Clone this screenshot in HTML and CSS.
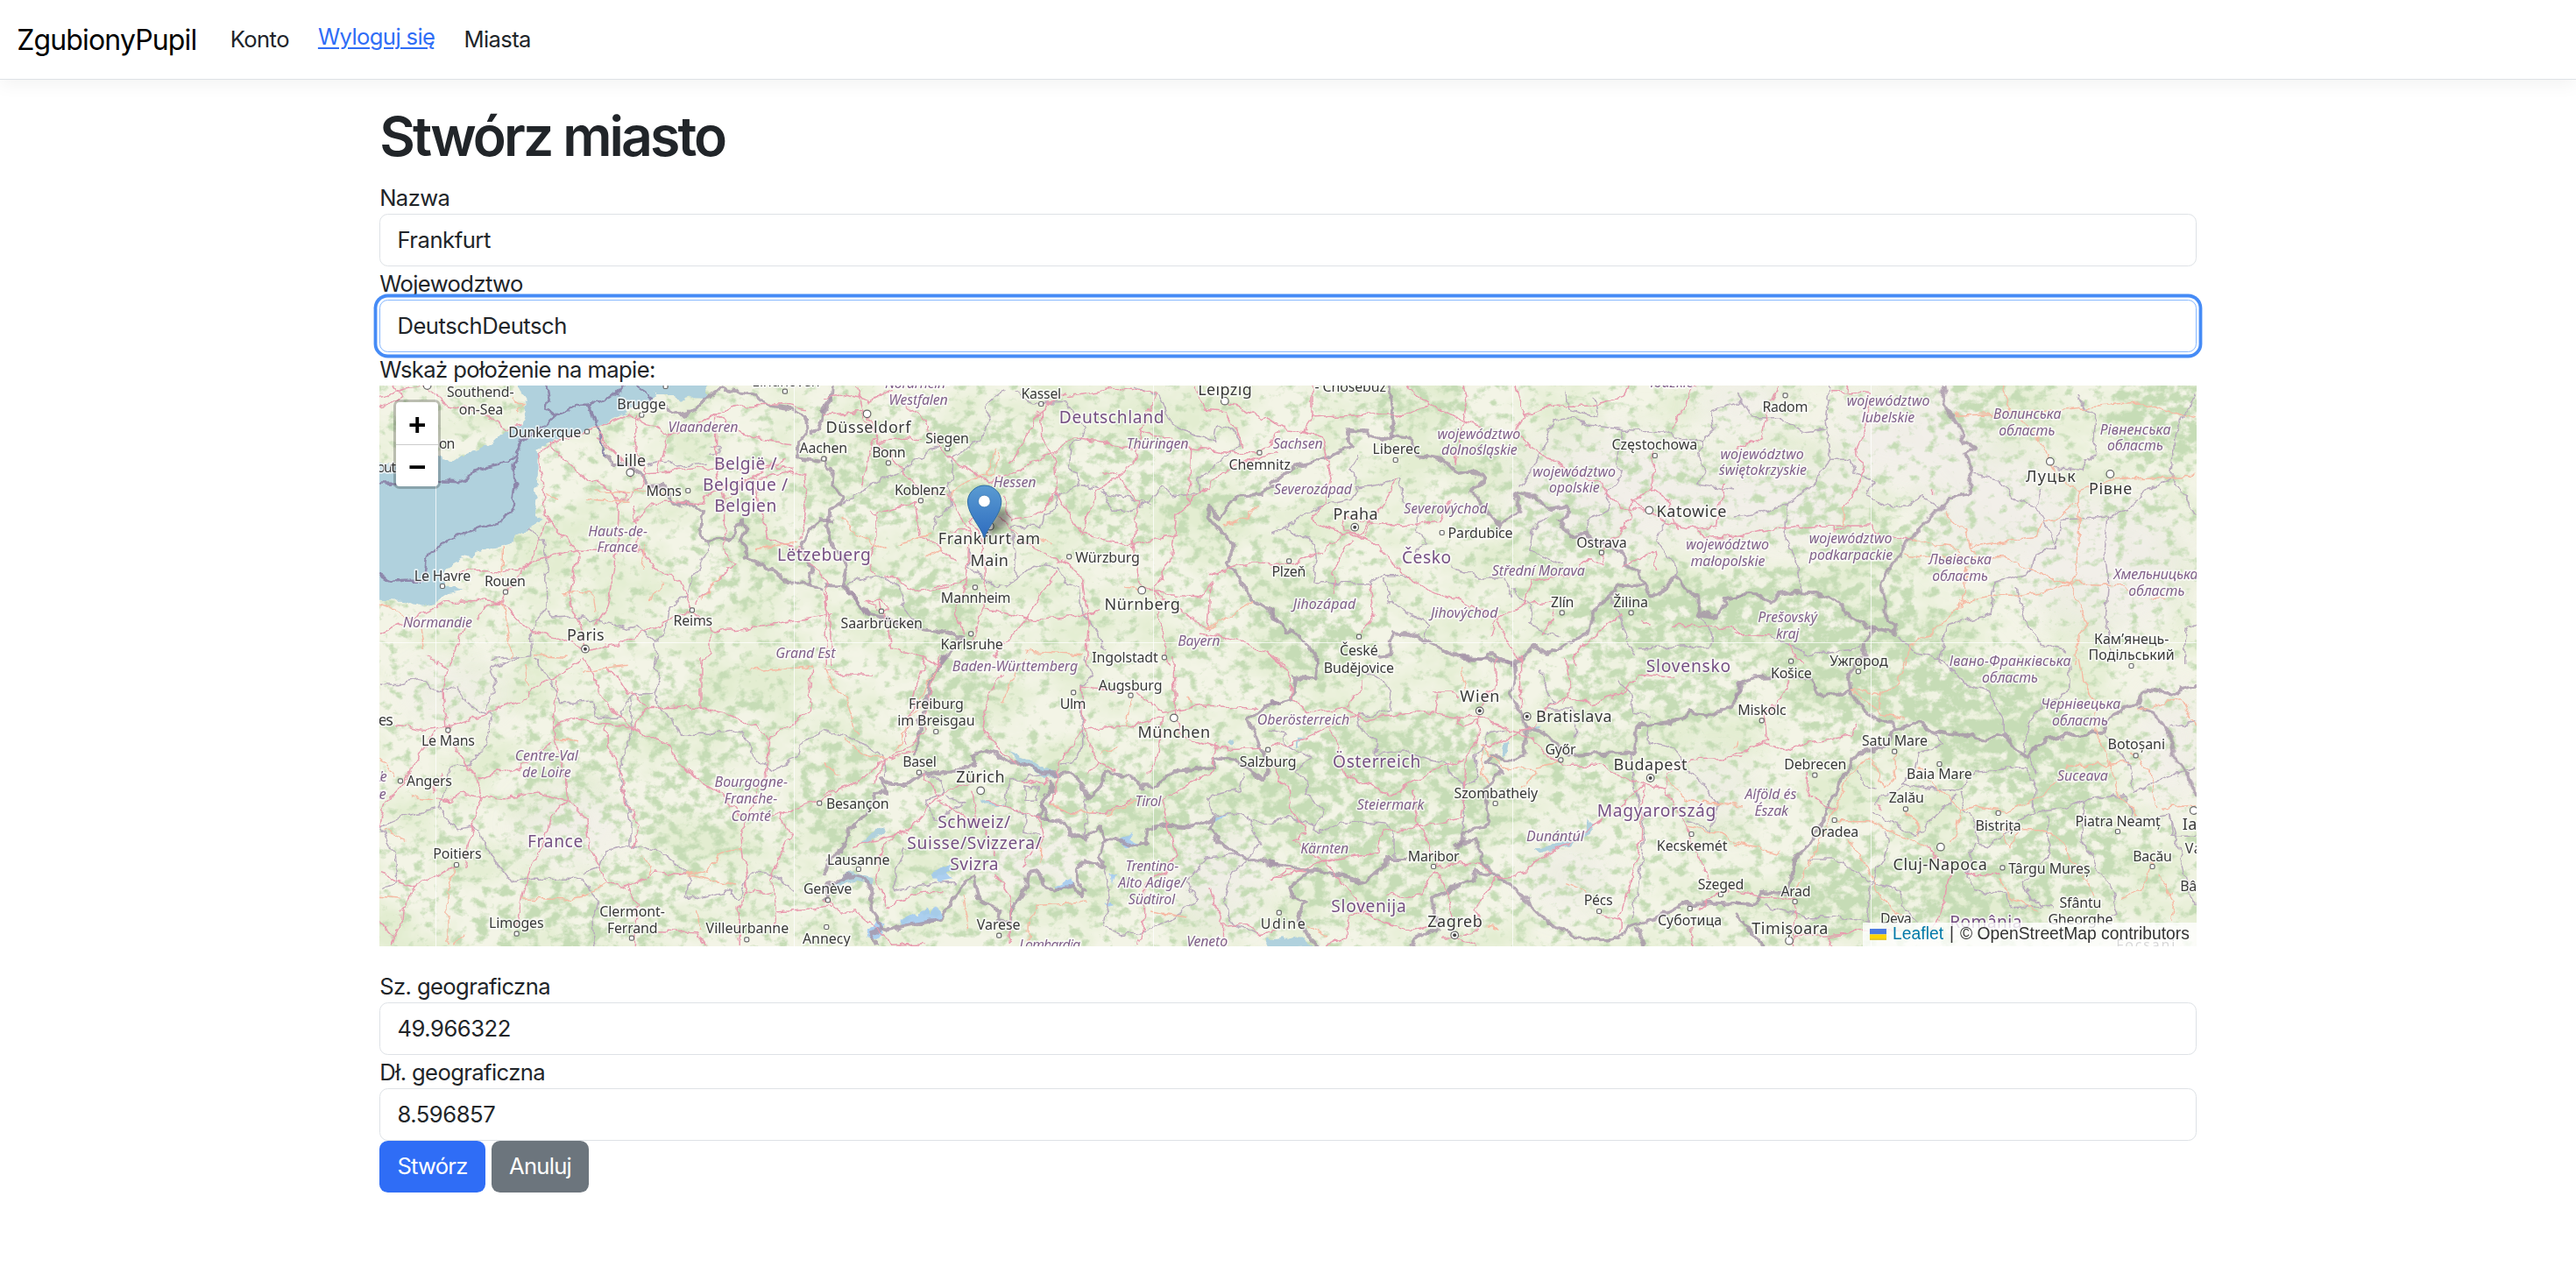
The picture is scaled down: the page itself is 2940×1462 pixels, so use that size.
FILE: index.html
```html
<!DOCTYPE html>
<html lang="pl">
<head>
<meta charset="utf-8">
<title>Stwórz miasto - ZgubionyPupil</title>
<link rel="stylesheet" href="styles.css">
</head>
<body>
<header class="navbar">
  <a class="brand" href="#">ZgubionyPupil</a>
  <nav class="nav">
    <a class="nav-link konto" href="#">Konto</a>
    <a class="logout" href="#">Wyloguj się</a>
    <a class="nav-link" href="#">Miasta</a>
  </nav>
</header>
<main class="container">
  <h1>Stwórz miasto</h1>
  <form class="form">
    <label for="name">Nazwa</label>
    <input class="control" id="name" type="text" value="Frankfurt">
    <label for="region">Wojewodztwo</label>
    <input class="control focused" id="region" type="text" value="DeutschDeutsch">
    <label class="map-label">Wskaż położenie na mapie:</label>
    <div class="map">
      <svg class="map-canvas" id="map" viewBox="433 440 2074 640" preserveAspectRatio="none">
        <defs>
          <filter id="woods" filterUnits="userSpaceOnUse" x="433" y="440" width="2074" height="640" color-interpolation-filters="sRGB">
            <feGaussianBlur in="SourceAlpha" stdDeviation="14" result="d"/>
            <feTurbulence type="fractalNoise" baseFrequency=".07 .085" numOctaves="5" seed="7"/>
            <feColorMatrix values="0 0 0 0 0  0 0 0 0 0  0 0 0 0 0  0 0 0 1 0" result="n"/>
            <feComposite in="n" in2="d" operator="arithmetic" k2="4.5" k3="1.35" k4="-2.5" result="m"/>
            <feFlood flood-color="#c6dcb6"/>
            <feComposite in2="m" operator="in"/>
          </filter>
          <filter id="fields" filterUnits="userSpaceOnUse" x="433" y="440" width="2074" height="640" color-interpolation-filters="sRGB">
            <feTurbulence type="fractalNoise" baseFrequency=".012 .016" numOctaves="5" seed="21"/>
            <feColorMatrix values="0 0 0 0 .89  0 0 0 0 .93  0 0 0 0 .82  0 0 0 3 -1.2"/>
          </filter>
          <filter id="rough" filterUnits="userSpaceOnUse" x="433" y="440" width="2074" height="640" color-interpolation-filters="sRGB">
            <feTurbulence type="fractalNoise" baseFrequency=".07" numOctaves="3" seed="3"/>
            <feDisplacementMap in="SourceGraphic" scale="11" xChannelSelector="R" yChannelSelector="G"/>
          </filter>
          <filter id="soft"><feGaussianBlur stdDeviation="22"/></filter>
          <filter id="shade"><feGaussianBlur stdDeviation="3"/></filter>
          <linearGradient id="pin" x1="0" y1="0" x2="0" y2="1">
            <stop offset="0" stop-color="#5a9bd2"/><stop offset="1" stop-color="#2e6cbf"/>
          </linearGradient>
        </defs>
      </svg>
      <div class="zoom"><span>+</span><span>−</span></div>
      <div class="attribution">
        <svg class="flag" viewBox="0 0 12 8"><path fill="#4C7BE1" d="M0 0h12v4H0z"/><path fill="#FFD500" d="M0 4h12v3H0z"/><path fill="#E0BC00" d="M0 7h12v1H0z"/></svg>
        <a href="#">Leaflet</a><span>|</span><span>© OpenStreetMap contributors</span>
      </div>
    </div>
    <label for="lat">Sz. geograficzna</label>
    <input class="control" id="lat" type="text" value="49.966322">
    <label for="lng">Dł. geograficzna</label>
    <input class="control" id="lng" type="text" value="8.596857">
    <div class="actions">
      <button class="btn primary" type="button">Stwórz</button>
      <button class="btn secondary" type="button">Anuluj</button>
    </div>
  </form>
</main>
<script src="map.js"></script>
</body>
</html>
```
FILE: styles.css
```css
* { box-sizing: border-box; }
body {
  margin: 0;
  background: #fff;
  color: #212529;
  font: 25.6px/1.5 Inter, "Noto Sans", sans-serif;
  letter-spacing: -0.6px;
}
.navbar {
  display: flex;
  align-items: center;
  height: 91px;
  padding: 1px 19.2px 0;
  border-bottom: 1px solid #dee2e6;
  box-shadow: 0 6.4px 19.2px rgba(0, 0, 0, .05);
}
.brand { margin-right: 38.4px; color: #000; font-size: 32px; text-decoration: none; letter-spacing: -0.85px; }
.nav { display: flex; gap: 33px; align-items: center; }
.nav-link { color: #212529; text-decoration: none; }
.logout { color: #2f6df6; margin-top: -6px; text-underline-offset: 3px; }
.container { width: 2112px; margin: 25.6px auto 0; padding: 0 19.2px; }
h1 { margin: 0 0 12.2px; font-size: 62.5px; font-weight: 600; line-height: 76.8px; letter-spacing: -2.9px; }
.form { display: flex; flex-direction: column; }
label { height: 38.4px; padding-top: 1px; line-height: 38.4px; }
.control {
  height: 59.6px;
  padding: 0 19.2px;
  border: 1px solid #dee2e6;
  border-radius: 9.6px;
  background: #fff;
  color: #212529;
  font: inherit;
  letter-spacing: -0.45px;
  outline: 0;
}
.focused { border-color: #86b7fe; box-shadow: 0 0 0 2.6px #fff, 0 0 0 6.4px #458bf6; }
.map { position: relative; height: 640px; margin-bottom: 25.6px; overflow: hidden; background: #f1f2e2; }
.map-canvas { display: block; width: 100%; height: 640px; }
.zoom {
  position: absolute;
  left: 16px;
  top: 16px;
  border: 3px solid rgba(0, 0, 0, .22);
  border-radius: 7px;
  background: #fff;
  background-clip: padding-box;
  color: #000;
}
.zoom span { display: block; width: 48px; height: 48px; text-align: center; font: bold 35px/52px "Liberation Sans", sans-serif; letter-spacing: 0; }
.zoom span + span { border-top: 1px solid #ccc; line-height: 50px; }
.attribution {
  position: absolute;
  right: 0;
  bottom: 0;
  display: flex;
  align-items: center;
  gap: 7px;
  height: 27px;
  padding: 0 8px;
  background: rgba(255, 255, 255, .8);
  color: #333;
  font: 19.3px/26px "Liberation Sans", sans-serif;
  letter-spacing: 0;
}
.attribution a { color: #0078a8; text-decoration: none; }
.flag { width: 19.2px; height: 12.8px; }
.actions { display: flex; gap: 7px; }
.btn { height: 59.6px; padding: 0 20.2px; border: 0; border-radius: 9.6px; color: #fff; font: inherit; letter-spacing: -0.75px; }
.primary { background: #2f6df6; }
.secondary { background: #6c757d; }

.place { font-family: "Noto Sans", sans-serif; letter-spacing: 0; paint-order: stroke; stroke: rgba(255, 255, 255, .7); stroke-width: 3.4px; stroke-linejoin: round; fill: #383838; }
.town { font-size: 16px; }
.city { font-size: 18px; }
.country { font-size: 19.2px; fill: #754f83; }
.region { font-size: 16px; font-style: italic; fill: #80608a; }
.road, .trunk, .border, .line, .limit { fill: none; stroke-linejoin: round; }
.road { stroke: #e89bae; stroke-width: 1.5; }
.trunk { stroke: #f6b9a3; stroke-width: 1.4; }
.border { stroke: #a594a8; stroke-width: 3.9; opacity: .8; }
.line { stroke: #b8a9bc; stroke-width: 1.5; }
.limit { stroke: #8d87ab; stroke-width: 2.6; }
.water { fill: #b0d1dd; }
.glacier { fill: #9cc7f5; opacity: .8; }
.dot { fill: #fff; stroke: #666; stroke-width: 1.2; }
.bull { fill: #444; }
.seam { stroke: #fff; stroke-width: 1; opacity: .75; }
```
FILE: map.js
```js
const NS = 'http://www.w3.org/2000/svg';
const svg = document.getElementById('map');
// Survey sheets: origin x, origin y, horizontal scale. Vertical scale is always 3.
const SHEETS = {
  A: [430, 430, 3], B: [430, 750, 3], C: [940, 430, 3], D: [940, 750, 3],
  E: [1450, 430, 2.904], F: [1450, 750, 2.904], G: [1980, 430, 2.904], H: [1980, 750, 2.904]
};
const X = (s, x) => SHEETS[s][0] + x / SHEETS[s][2];
const Y = (s, y) => SHEETS[s][1] + y / 3;
function add(parent, tag, attrs, text) {
  const e = document.createElementNS(NS, tag);
  for (const k in attrs) e.setAttribute(k, attrs[k]);
  if (text) e.textContent = text;
  parent.appendChild(e);
  return e;
}
function toPath(s, str, close) {
  const p = str.split(' ').map(q => { const [x, y] = q.split(',').map(Number); return X(s, x).toFixed(1) + ' ' + Y(s, y).toFixed(1); });
  return 'M' + p.join('L') + (close ? 'Z' : '');
}
function layer(attrs) { return add(svg, 'g', attrs || {}); }

add(svg, 'rect', { x: 433, y: 440, width: 2074, height: 640, fill: '#f3f4e6' });
add(svg, 'rect', { x: 433, y: 440, width: 2074, height: 640, filter: 'url(#fields)' });
const pale = layer({ filter: 'url(#soft)', fill: '#f2eeea', opacity: .8 });
[[1830, 560, 110, 70], [2010, 570, 110, 50], [2180, 500, 90, 60], [2400, 640, 100, 80], [2280, 580, 80, 70], [1990, 460, 60, 30],
 [520, 790, 60, 30], [1180, 980, 60, 30], [1390, 1000, 50, 60], [650, 940, 60, 40], [2480, 850, 40, 70], [1960, 900, 40, 40], [1790, 1000, 50, 40]]
  .forEach(([cx, cy, rx, ry]) => add(pale, 'ellipse', { cx, cy, rx, ry }));

// Wooded areas: centre, radii, density
const woods = layer({ filter: 'url(#woods)' });
[[1470, 1000, 1100, 110, .12], [1600, 850, 120, 35, .6], [1570, 920, 150, 60, .5], [1350, 900, 190, 60, .35], [1200, 960, 180, 90, .25],
 [1590, 1000, 130, 50, .45], [1090, 800, 50, 80, .6], [960, 900, 50, 90, .45], [1060, 690, 60, 40, .6], [1100, 540, 120, 70, .5],
 [1300, 560, 90, 80, .35], [1390, 570, 50, 30, .5], [1500, 720, 60, 60, .6], [1780, 620, 60, 60, .45], [1900, 700, 120, 40, .7],
 [1880, 790, 110, 50, .55], [2050, 700, 150, 50, .6], [2140, 760, 120, 60, .65], [2260, 820, 90, 50, .8], [2340, 880, 60, 60, .7],
 [2380, 960, 60, 60, .5], [2270, 860, 60, 40, .5], [2090, 1020, 60, 50, .7], [2190, 1020, 80, 60, .5], [2290, 1000, 80, 60, .45],
 [2470, 480, 60, 50, .8], [2270, 460, 70, 40, .5], [2430, 580, 70, 12, .6], [1630, 460, 60, 20, .6], [2070, 580, 40, 40, .45],
 [2170, 620, 60, 30, .45], [850, 640, 50, 50, .4], [780, 820, 110, 60, .35], [780, 930, 60, 70, .35], [640, 880, 50, 60, .4],
 [620, 1060, 80, 40, .5], [730, 1040, 60, 50, .3], [960, 560, 50, 60, .4], [1820, 880, 50, 40, .4], [1440, 700, 120, 100, .2],
 [1680, 560, 60, 50, .3], [1580, 450, 80, 30, .2], [2110, 830, 60, 50, .35], [1900, 530, 90, 30, .3]]
  .forEach(([cx, cy, rx, ry, o]) => add(woods, 'ellipse', { cx, cy, rx, ry, opacity: o }));

const ink = layer({ filter: 'url(#rough)' });
function draw(cls, s, list, close) { list.forEach(str => add(ink, 'path', { class: cls, d: toPath(s, str, close) })); }

draw('water', 'A', [
  '500,10 940,10 960,75 905,92 850,125 770,165 720,185 640,205 590,225 548,250 552,330 545,400 540,470 575,482 515,520 450,570 340,600 240,655 232,710 300,735 240,745 200,775 150,788 90,768 -30,762 -30,290 60,300 200,270 250,292 290,265 350,250 400,225 440,185 495,165 515,100 510,70 470,10',
  '930,20 1130,20 1140,72 1080,70 1040,80 1010,60 960,60'], true);
draw('water', 'D', [
  '630,320 700,345 740,375 800,400 760,415 720,390 660,350', '40,765 100,735 175,755 170,775 100,762 45,785', '125,640 170,600 205,580 200,600 150,640',
  '540,480 590,505 620,500 600,512 560,505', '1385,285 1405,280 1405,298 1385,298', '1530,975 1575,960 1575,1000 1530,1000'], true);
draw('water', 'F', [
  '775,290 797,278 790,320 768,335', '880,655 960,635 1040,605 1045,562 1075,572 1060,605 980,645 920,668 885,668', '-10,965 60,965 100,955 140,990 -10,1000', '92,275 104,275 98,310 90,310', '860,230 900,240 870,245'], true);
draw('glacier', 'D', [
  '370,740 395,735 430,710 450,722 425,745 440,760 390,770', '260,900 280,895 310,880 325,885 350,850 365,880 385,850 405,880 395,905 330,910 265,918', '150,940 190,900 215,910 180,965 150,965', '1010,625 1055,600 1045,625 1085,645 1040,655', '790,785 840,760 855,780 800,800', '1340,545 1385,535 1380,545 1340,555', '985,745 1003,740 990,775', '965,845 985,842 995,855 975,860'], true);

draw('limit', 'A', ['580,30 590,80 583,110 612,132 570,170 500,215 480,255 470,300 472,380 460,465 420,500 330,525 270,550 205,590 170,625 162,695 100,695 45,698 -20,670',
  '612,132 660,120 700,98 722,98 750,160 770,215 780,265', '725,105 800,70 850,30', '890,30 920,50 940,80', '480,255 450,290 390,302 325,330 280,358 210,355 130,350 50,368 -20,366']);
draw('border', 'A', ['780,265 810,300 860,300 915,340 925,375 975,372 1000,400 1015,440 1070,428 1120,460 1108,540 1130,565 1220,550 1230,510 1260,490 1265,530 1245,560 1270,620 1330,645 1380,680 1400,712 1470,705 1530,730',
  '990,100 1040,130 1095,115 1130,75 1190,40 1290,60 1340,100 1410,110 1470,140 1475,190 1440,230 1440,280 1520,290', '1480,705 1490,660 1455,600 1480,530 1520,490 1560,488', '1560,70 1530,110 1520,160 1490,190']);
draw('border', 'C', ['30,30 25,90 0,125', '0,280 30,330 25,370 65,410 60,435 20,455 10,510 30,580 80,640 65,710 110,760 150,820', '0,715 60,715 110,760 145,815 200,825 330,860 400,870 480,893 440,940 400,990',
  '1560,370 1520,375 1500,405 1420,410 1390,430 1360,485 1315,445 1320,480 1350,520 1410,580 1380,640 1410,670 1465,765 1510,790 1560,840']);
draw('border', 'D', ['420,0 375,60 355,140 325,250 320,340', '340,400 290,435 235,435 195,415 210,460 180,470 150,540 85,590 70,650 20,690 0,750', '340,395 400,400 440,390 520,370 510,335 550,320 590,330 620,360 680,362 760,400 805,400 850,395 900,455 910,485 950,440 960,395 1010,400 1050,410 1085,445 1130,445 1200,390 1335,378 1340,340 1420,360 1510,425 1520,350 1490,300 1455,215 1510,170 1560,155',
  '775,420 780,455 745,500 770,555 830,570 850,605 890,625 950,580 965,620 1010,625 1060,650 1100,640 1110,590 1170,575 1250,580 1340,550 1320,590 1350,630 1420,680 1560,710', '745,500 740,555 775,555', '965,620 945,690 960,720 900,700 870,720 870,770 890,800 880,820 850,780 790,800 750,780 735,735 700,740 690,800 640,870 640,920',
  '640,910 600,900 605,860 530,830 515,750 490,760 440,830 400,900 300,915 215,935 170,870 160,770 110,745 20,770 0,830', '205,920 160,950 180,990']);
draw('border', 'E', ['395,30 410,120 400,210 370,220 320,190 255,190 260,220 280,235 170,280 100,300 0,360', '400,200 460,210 470,240 500,275 580,290 620,330 670,320 710,350 665,390 700,430 725,470 760,510 800,480 830,465 805,395 880,415 930,455 985,440 985,480 960,495 1000,550 1050,545 1080,560 1165,600 1175,640 1215,670 1245,710 1255,745 1290,745 1345,685 1380,740 1415,750 1420,810 1480,820 1510,760 1568,745',
  '0,800 60,870 130,920 160,980', '360,960 400,950 405,880 470,885 550,920 630,965 700,970 730,945 800,985 830,970 870,925 910,945 990,915 1060,870 1070,800 1130,750 1150,715 1245,712']);
draw('border', 'F', ['0,160 70,145 80,65 150,80 160,0', '620,0 730,10 760,10 810,25 815,70 795,120 830,200 850,240 840,345 780,350 740,335 715,355 765,395 710,450 725,570 650,600 615,660', '850,240 910,260 960,320 1010,335 1110,330 1200,325 1215,235 1290,230 1370,215 1390,180 1450,210 1530,160 1568,90',
  '0,705 130,730 180,735 310,770 370,720 400,690 450,690', '130,735 65,790 75,820 120,840 90,890 110,940 160,990', '615,640 680,620 700,690 730,740 800,780 860,850 910,905 1010,960 1100,970 1160,960 1185,925 1260,900 1380,840 1568,845', '730,745 680,735 675,770 600,790 540,830 545,880 560,930 480,960 465,990', '1215,925 1240,990']);
draw('border', 'G', ['690,30 700,100 740,160 760,220 800,245 765,270 790,320 775,400 710,415 640,490 580,560 500,680 490,715 505,830 535,850 530,880 480,865 430,850 360,810 340,770 280,740 200,735 150,745 120,780 80,745 0,745', '460,860 430,920 425,960']);
draw('border', 'H', ['0,140 20,90 60,70 150,65 250,80 290,135 340,130 385,110 410,170 480,215 520,215 540,250 600,220 650,250 740,265 830,285 890,262 930,310 970,345 1030,280 1130,265 1220,250 1260,195 1330,165 1370,110 1450,125 1530,95', '1340,170 1390,190 1440,260 1465,350 1510,420 1530,480', '540,250 490,310 430,320 390,350 350,430 300,540 250,640 200,690 180,780 180,810 90,800 60,850 0,840', '385,110 375,60 420,0', '0,880 60,940 95,990']);

draw('line', 'A', ['510,520 570,560 585,625 575,690 580,790 600,825 700,820 860,860 890,850 950,905 990,880 1000,780 1060,755 1085,680 1130,600 1130,565', '580,790 525,870 530,950 400,965', '925,300 990,285 1030,310 1130,295', '1145,235 1175,240 1165,270 1140,270', '950,905 960,990']);
draw('line', 'B', ['540,0 590,80 630,155 740,150 750,205 830,205 865,135 945,130 970,50 945,0', '945,130 1000,200 1040,265 1140,265 1210,250 1260,260 1290,340 1350,385 1440,350 1450,300 1530,250', '9,90 70,95 150,75 220,125 270,95 310,160 395,200 370,300 320,370 250,385 215,520 270,590 330,580 400,690 460,770 540,760 700,760 760,830 740,900 750,990', '865,135 880,240 850,320 830,400 870,560 870,640 780,660 760,720 705,740', '870,640 970,670 1010,700 1070,745 1060,830 1200,800 1240,830 1280,735 1350,740 1430,800', '9,580 90,545 215,520', '9,580 60,670 70,770 20,790', '480,0 390,40 410,100 375,180', '540,0 560,30']);
draw('line', 'C', ['70,430 130,400 170,360 250,330 350,260 400,240 440,280 450,350 420,370 440,440 390,480 380,530', '440,280 530,220 570,140 550,100 620,50', '660,50 710,90 830,85 900,180 850,240 840,320 870,330 870,370 960,390 990,460 1040,460 1110,430 1160,370 1200,410 1290,400 1280,350 1360,290 1430,230 1400,180 1350,170 1340,220 1200,170 1150,70 1060,40', '870,370 800,410 800,460 750,470 740,515 640,510 660,600 660,690 620,720 560,700 500,650 500,590', '660,690 720,640 800,650 830,700 880,720 890,810 940,880 960,940', '70,710 190,680 260,720 280,810 320,830', '1120,440 1060,420 950,400']);
draw('line', 'D', ['0,250 100,280 200,340 210,410', '340,400 410,420 420,460 350,490 380,560', '890,0 920,60 880,100 885,300 870,350 805,370', '770,400 640,420 620,510 690,540 690,600 740,610', '900,480 900,590 890,620', '450,770 400,770 240,800 250,730 280,650', '1340,550 1310,480 1430,450 1440,400', '1450,545 1500,640 1400,740 1370,820 1400,910 1480,950', '960,720 985,800 960,920 1020,950 1100,940 1220,880 1280,830 1240,770 1310,690 1440,680', '1340,540 1420,535 1480,570 1560,560', '690,440 740,450 730,490 690,490 690,440', '380,560 480,500 420,480']);
draw('line', 'E', ['0,540 50,520 80,490 180,440 270,420 290,380 360,370 430,350 440,430 490,470 490,530 520,580 480,600', '50,520 150,570 155,620 145,710 200,710 330,710 380,680 460,680', '290,370 270,320 300,270', '380,690 390,770 450,800 530,850 510,900', '600,650 700,690 780,690 800,750', '800,720 860,780 860,850 960,890', '830,380 900,260 920,210 940,150 1000,140 1050,165 1170,180 1310,190 1340,210 1430,220 1420,270 1440,330 1420,370 1540,390', '1170,180 1150,290 1170,340 1120,390 1130,460 1050,490 1050,540', '920,480 870,520 860,600 970,640', '1310,490 1280,560 1320,620 1350,660 1340,690', '985,50 990,110 1080,140 1070,70', '1430,220 1470,180 1460,120 1568,80', '1130,750 1170,870 1210,960', '1430,820 1470,880 1460,920 1220,930']);
draw('line', 'F', ['290,40 380,80 400,120 400,180 330,200 290,190 300,250 350,280 350,330 450,320 530,350 590,370 600,400 640,420', '0,250 50,260 50,300 90,320 140,345 80,390 130,430 110,470 180,520 150,580 160,600 240,560 380,570 410,600 410,690', '0,565 60,545 150,580', '640,420 640,540 640,600', '640,440 690,420 680,340 710,300 720,260 780,250', '900,40 900,90 940,150 920,180 1010,180 1010,280', '1250,240 1250,290 1340,310 1370,370 1430,430 1480,500 1460,590 1380,560', '1190,330 1210,450 1240,550 1230,720 1200,900', '1150,80 1200,130 1210,190 1260,200']);
draw('line', 'G', ['315,30 300,150 320,280 260,370 180,430 70,470 0,480', '170,430 170,560 200,620 220,730', '320,280 380,280 400,330 460,360 440,410 490,440 570,445 620,410 690,450', '10,60 60,140 150,140 230,190 300,180', '795,330 880,350 920,420 1000,440 1020,390', '1130,60 1200,150 1190,260 1150,320 1060,310', '1530,60 1460,190 1450,340 1370,390 1300,450 1240,480 1080,490 1070,580 1000,610 980,670 860,710 850,810 700,850 680,980', '1450,340 1530,470', '1240,480 1230,600 1240,700 1230,830 1250,960', '930,720 960,830 1010,910 1100,940', '1530,840 1490,870 1490,990', '540,890 600,950 690,970', '1000,440 1030,510 1070,580', '120,890 250,950 420,930']);
draw('line', 'H', ['680,0 760,90 840,120 890,210 890,260', '1110,0 1110,120 1020,160 970,240 960,330', '610,330 690,300 660,260', '610,330 600,390 550,430 640,450 740,460 800,390 960,380 1000,420 990,530 940,560 880,620 840,650 790,640 770,750', '460,500 510,470 560,440', '450,530 600,610 650,560 740,470', '490,590 510,620 490,700 450,770 440,900 350,890 230,890 100,850', '1000,530 1080,520 1150,490 1290,470 1330,560 1440,540 1450,610 1530,610', '1150,490 1150,620 1200,710 1250,800 1270,880 1200,900', '980,340 1000,400', '1220,260 1310,370 1320,460 1410,420 1530,380', '450,770 540,790 570,870 600,900', '770,750 790,800 900,810 920,860 1020,850', '1040,540 1040,680 960,770 980,830 1060,860', '250,690 330,690 400,740 450,770', '1440,540 1480,680 1500,780 1530,850', '400,390 430,440 470,450', '1440,240 1530,220', '750,460 760,520 800,560 810,650']);

draw('road', 'A', ['9,880 140,820 240,770 380,765 430,770 520,870 650,905 710,935 830,915 1000,840 1080,800 1150,870 1300,855 1560,815', '710,935 690,840 660,770 690,600 610,515 580,470 570,350 550,270 600,225 720,190 860,130 1000,200 1160,130 1290,210 1420,230', '590,225 650,290 720,350 790,380 830,440 820,600 790,790 750,850', '830,440 900,380 920,330 880,230 890,130', '430,770 520,630 590,490', '270,670 330,665 480,665 530,630 620,610 690,595 910,595 950,650 1040,700 1080,800', '880,500 950,430 1110,430 1180,380 1420,320 1460,340 1470,450 1450,560', '920,330 1140,310 1420,310', '880,440 900,590', '1090,770 1230,640 1190,600 1190,400', '1160,130 1160,300 1190,420 1300,340 1400,280', '1160,130 1240,100 1400,95 1470,110', '1290,340 1340,560 1450,590 1480,640 1540,700 1540,990', '9,70 90,40 160,30 250,100 350,120 440,175 490,165', '60,30 90,70 9,110', '250,990 300,860', '760,190 840,290', '960,330 1000,200 1160,130', '430,770 370,780 340,830', '1140,880 1140,940 1110,990', '870,340 870,310 760,210', '820,390 850,400 840,430 810,410']);
draw('road', 'B', ['180,0 240,40 225,120 240,240 270,320 340,410 360,480 310,640 300,720', '700,10 600,75 530,110 500,150 380,190 240,240 170,250 60,230', '710,10 760,110 810,190 880,240 990,300 1080,410 1180,470 1240,540 1380,540 1560,470', '615,80 605,180 605,280 640,380 650,490 720,560 730,660 790,770 860,790 890,850 880,990', '605,240 660,215 790,230 880,240 920,170 1050,165 1200,195 1300,240 1340,275 1430,230 1480,180 1490,35', '790,230 790,300 840,400 850,500 900,575 880,650', '790,30 860,120 920,165', '1110,0 1110,180', '1340,275 1335,390 1300,470 1250,590 1255,660 1270,790 1240,860 1240,990', '1380,540 1420,610 1350,750 1370,870 1360,920', '1260,800 1350,810', '650,490 600,550 570,650 530,720 500,820 480,930', '350,475 440,485 560,465 650,490', '9,580 30,500 90,430 200,250', '200,480 250,495 290,465 350,475', '230,400 190,460', '9,740 130,785 270,720', '130,785 85,860 80,920 50,980', '850,790 960,735 1060,745', '970,935 1100,945 1120,990', '1370,870 1500,860 1560,855', '350,420 490,375 600,290', '9,900 60,950']);
draw('road', 'C', ['110,30 130,120 180,200 280,340 330,390 430,410 480,490 500,540 490,700 450,800 480,880', '0,75 60,60 160,80 240,40', '0,130 150,120 190,220 340,210', '230,60 350,150 380,220 450,290 560,360 640,330 770,270 860,210 960,220 1060,250', '640,300 700,190 745,110 830,50', '745,110 750,210 790,290 800,400 880,540 1050,575 1210,540', '620,410 640,490 720,480 800,400', '600,480 640,520 690,570 800,630 840,640 890,700 910,850 900,990', '800,660 700,820 580,960', '880,540 930,400 1000,340 1080,430 1060,560 1080,700 1130,740 1290,750 1330,710 1320,870 1250,820 1130,740 1150,830 1180,990', '1000,340 1060,300 1090,190 1140,60 1010,40 830,65', '1090,180 1250,240 1390,260 1490,260 1560,190', '1260,240 1250,440 1210,470 1190,620 1130,740', '1250,430 1390,310 1560,260', '1300,110 1380,120 1440,240', '1320,680 1460,635 1560,640', '1290,880 1450,910 1560,970', '1300,110 1270,30', '1380,90 1560,160', '550,790 700,830 880,820 940,800', '550,400 500,500 550,560 550,790 510,910', '380,720 490,700', '200,680 250,690 320,740 430,720', '190,770 220,860 230,930 350,960 400,990', '160,460 180,480 180,560 150,620 180,680', '180,470 320,430', '310,430 340,550 420,600 450,640', '0,740 30,870 30,990', '130,380 160,250 180,210', '140,770 200,765 230,790 200,800 140,770', '430,530 500,530', '960,330 1000,330']);
draw('road', 'D', ['0,40 60,60 160,60', '350,0 310,130 280,290', '400,0 360,130 340,260 270,320 180,370 120,430 0,470', '610,60 560,150 545,250 610,330 670,370', '880,100 890,250 940,360 1000,390', '880,100 1070,120 1160,190 1200,185 1300,165 1480,175', '1200,0 1205,190 1220,270 1350,315 1500,310', '890,250 1050,235 1170,205', '885,255 800,360 780,500 830,530 950,535 1060,490', '1160,210 1150,330 1110,400', '1345,300 1330,390 1160,490 1180,590 1210,670 1170,740 1100,770 1100,900 1080,990', '340,400 390,480 300,580 210,640 180,750 220,860 300,810 410,800', '0,830 60,870 110,870 180,930 240,985 350,980', '510,460 520,540 560,620 600,680', '560,490 640,520 740,550 755,610 680,720', '590,750 640,820 640,990', '390,480 520,410', '670,420 760,440 770,410', '1370,990 1370,920 1450,910 1480,950 1560,940', '1320,790 1370,920', '170,430 210,350 320,320', '100,650 200,620 290,600', '390,490 480,540 530,560', '940,360 900,400']);
draw('road', 'E', ['0,150 50,180 110,185 140,140 390,125 420,140 530,90 640,155 700,170', '110,185 170,210 200,330 180,440 130,490', '530,90 450,40', '640,155 650,80 640,30', '810,30 840,130 950,100 1050,100 1170,70 1190,30', '840,130 810,180 850,230 900,270 980,310 1110,380 1160,450 1250,460 1310,500 1420,520 1440,550 1568,545', '1250,460 1200,420 1190,490 1100,600 1110,650 1060,620 990,680 870,700 840,780 750,830 640,770 530,735 440,670 330,560 270,540', '1270,250 1265,390 1320,420 1350,520', '1330,180 1390,60 1410,30', '1265,390 1200,420', '330,500 440,510 570,495 600,420', '420,350 370,440 310,530 250,540 130,490', '250,540 170,600 80,640 0,650', '270,560 210,660 205,740', '330,710 345,810 300,880', '840,780 940,770 940,820', '750,830 770,880 830,980', '750,830 730,890', '1130,840 1060,900 1010,950 1010,990', '1160,820 1130,840', '1340,850 1530,860 1568,885', '1170,650 1270,600 1280,660', '640,160 610,300', '1500,360 1500,400 1480,510 1420,520', '140,30 140,140', '0,960 50,990', '900,880 940,830', '1230,840 1260,850', '240,480 340,500 310,550 250,520 240,480']);
draw('road', 'F', ['0,0 60,50 70,140 130,185 250,180 320,215 480,185 610,200 690,205 770,240 860,275 960,370 1110,370 1160,410 1230,435 1310,450', '750,0 750,80 700,170', '690,205 690,270 650,350 640,490 630,550', '640,350 560,380 460,440 400,470 250,400 200,240', '690,300 720,310 860,240 960,140 1070,155 1160,130 1220,60 1340,70', '1310,450 1320,400 1400,350 1568,345', '1310,450 1370,560 1390,620 1430,700 1450,770', '1235,440 1100,560 960,650 880,700 850,740 750,760 680,860 700,920 610,960', '1235,440 1230,620 1190,780 1160,890 1160,940', '0,300 50,305 200,240 300,190', '250,170 300,110 300,80', '0,370 60,440 70,520 120,590 80,630 170,700 360,670 370,600 490,580 530,640 550,710 700,705 730,740', '490,580 640,550', '470,450 490,580', '550,730 500,810 380,820', '550,730 590,800 600,900', '0,765 180,700 260,800 310,870 260,890 250,960 180,990', '310,880 460,940 530,920', '1090,885 1160,900', '610,960 570,960', '620,970 680,990', '980,0 1000,90 970,160', '830,0 830,180', '540,120 600,120 630,135', '555,120 545,190', '1400,890 1400,990', '1568,780 1480,810 1420,860', '0,770 50,730 120,735', '620,200 610,220 640,240 690,215']);
draw('road', 'G', ['150,30 100,150 90,210 0,250', '320,50 390,50 450,60 430,190 400,260 430,310 370,440', '0,545 130,525 200,515 350,510 450,510 470,540 590,560', '330,510 330,530 370,520', '0,880 130,885', '180,910 200,960 230,975', '650,385 650,410', '365,30 380,50']);
draw('road', 'H', ['180,90 160,140 100,190 110,280 0,340', '100,290 190,320 240,290 390,270 400,230', '240,390 240,470 330,520', '0,805 110,820 200,830 200,990', '310,960 400,940', '200,960 430,940 540,930', '640,650 720,740 700,840 650,960', '770,740 800,750 880,740', '470,500 490,520', '310,960 330,990']);
draw('trunk', 'A', ['9,780 110,820 150,850 160,930', '430,770 450,870 460,960', '540,950 650,955', '640,740 740,740 750,800', '430,580 430,680', '1110,760 1180,680', '580,400 620,420', '920,580 910,660', '720,420 860,430', '480,120 510,100 460,70', '1300,590 1440,570', '930,770 980,710', '760,390 1000,400']);
draw('trunk', 'B', ['260,730 240,850 240,990', '300,950 260,990', '500,825 640,830 710,820 790,770', '1060,745 1130,730 1180,670 1255,655', '1060,745 1230,780', '900,680 940,720 930,745', '9,350 40,370 60,410', '610,280 690,290', '1280,45 1490,30', '20,590 100,625', '120,480 190,490', '510,30 520,90', '700,45 860,25', '1090,870 1110,940', '9,820 80,825']);
draw('trunk', 'C', ['430,410 480,360 590,330 600,260', '350,620 410,590', '780,580 730,550', '1370,510 1420,500 1490,440', '60,480 120,540 220,590', '690,940 890,950', '1310,870 1400,810 1470,770', '1030,720 1090,730', '590,250 560,340', '260,570 370,540']);
draw('trunk', 'D', ['0,20 30,100 80,140 110,260', '380,50 300,210 250,320', '690,0 640,90 610,160', '1050,130 1040,240', '0,360 60,410', '70,280 150,340 220,350', '740,700 740,640', '780,500 850,535 930,530', '700,900 730,850 900,840', '480,820 500,930', '1120,870 1180,880 1240,890', '700,910 700,970', '950,330 1010,310', '960,540 1080,490', '1250,130 1260,160']);
draw('trunk', 'F', ['690,300 740,340 770,385 880,385 880,400 830,450', '880,375 960,360', '1320,420 1380,490 1568,510', '1380,580 1480,600 1568,640', '120,920 190,960', '630,40 650,110', '700,320 700,400 720,430', '980,770 1050,800', '720,920 760,930']);
draw('trunk', 'G', ['890,30 920,130 1000,190 1040,280 1080,350 1140,390 1140,430 1060,490 1020,500 1000,550 780,580 770,530 690,460', '730,130 850,125 1100,110 1340,90 1450,120 1530,145', '1140,390 1250,350 1530,340', '590,560 740,590 750,610', '560,610 700,620 900,620 1050,690 1110,705 1280,710 1320,750', '1140,430 1140,550 1130,680 1110,705 1170,850 1140,890 1130,990', '770,640 760,770 640,890 580,920 570,990', '750,770 880,745 930,750 1050,730 1110,705', '780,580 800,610', '370,440 360,510', '1380,760 1430,760']);
draw('trunk', 'H', ['385,110 500,130 540,80 570,0', '400,120 480,190 560,210', '1140,0 1150,80 1200,150 1200,250 1240,350 1270,460 1340,550', '530,325 530,400 500,450 450,340 380,400 340,500 260,680 210,790', '330,560 450,560 560,620 640,650', '610,380 680,460 750,520 800,510 900,530 990,490 1060,430 1100,370 1210,370', '750,520 720,640', '890,590 1050,590 1110,670 1190,810', '890,600 910,650 940,600', '0,640 150,670', '1410,520 1530,510', '1390,690 1350,800 1280,830', '1400,740 1460,840 1450,900', '1210,370 1310,360', '570,530 610,570 610,610', '380,620 450,740 470,810 560,890', '0,320 10,290', '880,760 920,830 1010,870', '1340,180 1480,140 1530,240', '1310,330 1380,390 1400,520', '480,120 480,180']);

const seams = layer();
[497.5, 906.5, 1316.5, 1726.5, 2135.5].forEach(x => add(seams, 'path', { class: 'seam', d: `M${x} 440V1080` }));
add(seams, 'path', { class: 'seam', d: 'M433 733.5H2507' });

const marks = layer();
const dots = {
  A: '173,30,2 720,188,1 907,131,1 868,328,2 1066,390,1 225,717,1 441,737,1 1080,799,1 714,932,3 1398,50,1 1531,281,1 989,33,1',
  B: '244,250,1 81,424,1 273,711,1 479,947,1 873,962,1 1267,967,1 1516,500,1 1540,924,1',
  C: '149,127,2 745,93,1 1374,83,2 424,246,1 222,295,1 333,424,1 841,616,1 519,721,1 198,803,1 1090,731,2 505,880,1 1167,961,1 1493,260,1 570,512,2',
  D: '856,121,1 1052,131,1 385,255,1 1200,208,2 327,395,1 538,457,2 120,726,1 601,953,1 1522,317,1 15,832,1',
  E: '415,285,1 280,515,3 569,534,1 62,631,1 294,890,1 1275,270,1 1256,457,2 1098,602,1 967,808,1 1196,808,1',
  F: '694,184,3 851,203,3 963,352,1 1260,414,3 746,501,1 541,717,1 1396,606,1 1090,870,1 611,952,3 29,875,1 1391,861,1 1493,813,1',
  G: '168,64,1 1046,290,2 1245,333,2 187,974,1',
  H: '410,49,1 1315,30,1 90,217,1 530,323,1 266,404,1 679,366,1 1330,337,1 567,520,1 874,534,1 331,558,1 1270,597,1 683,650,2 888,721,1 1385,717,1 200,837,1 181,971,2 1522,525,2'
};
for (const s in dots) dots[s].split(' ').forEach(d => {
  const [x, y, k] = d.split(',').map(Number), cx = X(s, x), cy = Y(s, y);
  if (k === 1) add(marks, 'rect', { class: 'dot', x: cx - 2.5, y: cy - 2.5, width: 5, height: 5, rx: 1.5 });
  else add(marks, 'circle', { class: 'dot', cx, cy, r: 4.3 });
  if (k === 3) add(marks, 'circle', { class: 'bull', cx, cy, r: 2 });
});

// Labels: class | text | left | right | baseline
const labels = {
  A: `town|Southend-|240|470|70;town|on-Sea|281|433|128;town|Brugge|823|990|112;town|Dunkerque|451|700|208;town|on|213|268|246;town|out|0|66|327;city|Lille|819|922|305;town|Mons|923|1044|408;region|Vlaanderen|998|1238|188;country|België /|1155|1370|318;country|Belgique /|1116|1408|390;country|Belgien|1156|1369|461;region|Hauts-de-|724|927|545;region|France|755|895|601;town|Le Havre|128|322|699;town|Rouen|369|510|718;region|Normandie|90|327|857;city|Paris|651|779|903;town|Reims|1016|1150|851;region|Grand Est|1366|1571|964;country|Lëtzebuerg|1371|1692|630;town|Aachen|1448|1612|262;town|Eindhoven|1285|1517|33`,
  B: `city|es|5|57|235;town|Le Mans|153|336|304;region|Centre-Val|473|690|353;region|de Loire|498|665|410;town|Angers|102|258|442;region|le|8|35|427;region|re|5|32|485;region|Bourgogne-|1157|1407|445;region|Franche-|1190|1372|502;region|Comté|1214|1350|560;country|France|516|706|652;town|Poitiers|193|359|691;town|Limoges|384|572|927;town|Clermont-|763|987|887;town|Ferrand|789|962|945;town|Villeurbanne|1127|1411|946;town|Genève|1461|1627|811;town|Annecy|1458|1622|982;town|Besançon|1539|1754|518;town|Lausanne|1542|1757|710`,
  C: `region|Nordrhein-|210|432|38;region|Westfalen|223|426|96;city|Düsseldorf|8|299|192;town|Kassel|677|814|74;country|Deutschland|807|1166|159;town|Siegen|349|498|228;town|Bonn|166|281|275;region|Thüringen|1038|1250|245;city|Leipzig|1282|1467|63;town|Chemnitz|1388|1600|318;region|Hessen|582|728|379;town|Koblenz|243|418|405;city|Frankfurt am|393|742|572;city|Main|503|633|648;town|Würzburg|862|1083|636;town|Mannheim|402|641|773;town|Saarbrücken|59|339|861;city|Nürnberg|962|1221|799;town|Karlsruhe|401|615|933;region|Bayern|1213|1358|920;town|Ingolstadt|919|1146|979`,
  D: `region|Baden-Württemberg|441|871|49;town|Augsburg|942|1160|114;town|Ulm|810|899|178;town|Freiburg|291|480|178;town|im Breisgau|253|518|235;city|München|1076|1324|275;town|Basel|271|387|376;city|Zürich|454|620|430;town|Salzburg|1425|1619|374;region|Tirol|1067|1157|510;country|Schweiz/|391|640|585;country|Suisse/Svizzera/|286|747|657;country|Svizra|433|599|729;region|Trentino-|1034|1216|731;region|Alto Adige/|1009|1240|788;region|Südtirol|1044|1204|845;town|Varese|525|674|932;town|Udine|1497|1650|929;region|Veneto|1243|1384|989;region|Lombardia|670|880|1003`,
  E: `town|- Chóśebuz|147|384|52;region|Sachsen|9|174|245;town|Liberec|339|496|263;region|województwo|554|829|212;region|dolnośląskie|567|819|268;region|województwo|870|1145|341;region|opolskie|924|1092|397;town|Częstochowa|1132|1416|249;region|Severozápad|12|271|402;city|Praha|208|357|488;region|Severovýchod|443|720|467;city|Katowice|1280|1512|479;town|Pardubice|589|804|552;country|Česko|436|599|640;town|Ostrava|1015|1182|584;region|Střední Morava|735|1043|680;town|Plzeň|5|118|685;region|Jihozápad|75|283|794;region|Jihovýchod|532|754|825;town|Zlín|930|1007|790;town|Žilina|1137|1252|790;town|České|230|357|955;region|łódzkie|1260|1403|37;region|województwo|1378|1653|592;region|małopolskie|1393|1640|648;region|województwo|1492|1769|281;region|świętokrzyskie|1487|1778|335`,
  F: `town|Budějovice|177|410|54;country|Slovensko|1246|1526|52;city|Wien|629|760|153;city|Bratislava|881|1132|222;region|Oberösterreich|-44|263|231;town|Győr|911|1013|334;country|Österreich|207|498|378;city|Budapest|1138|1382|386;town|Szombathely|609|887|484;region|Steiermark|287|510|523;country|Magyarország|1083|1477|545;region|Dunántúl|849|1040|629;region|Kärnten|100|260|673;town|Maribor|456|627|699;town|Kecskemét|1281|1515|662;town|Szeged|1417|1570|794;town|Pécs|1040|1135|850;country|Slovenija|202|450|874;city|Zagreb|521|703|923;town|Суботица|1284|1497|919`,
  G: `town|Radom|92|243|119;region|województwo|372|647|100;region|lubelskie|421|597|156;region|Волинська|858|1083|145;region|область|876|1062|202;region|Рівненська|1211|1446|197;region|область|1235|1421|252;city|Луцьк|965|1130|361;city|Рівне|1174|1317|401;region|województwo|247|522|569;region|podkarpackie|247|524|626;region|Львівська|643|852|641;region|область|655|840|698;region|Хмельницька|1256|1536|694;region|область|1306|1492|750;region|Prešovský|77|274|841;region|kraj|137|214|897;town|Кам’янець-|1192|1440|914;town|Подільський|1173|1458|970`,
  H: `town|Ужгород|315|508|30;town|Košice|120|256|72;region|Івано-Франківська|712|1115|31;region|область|820|1006|88;region|Чернівецька|1015|1280|176;region|область|1052|1238|233;town|Miskolc|10|171|199;town|Satu Mare|422|640|302;town|Botoșani|1237|1427|316;town|Debrecen|164|371|385;town|Baia Mare|570|787|417;region|Suceava|1070|1238|422;town|Zalău|511|628|499;region|Alföld és|34|205|486;region|Észak|66|178|543;town|Oradea|252|411|614;town|Bistrița|798|950|595;town|Piatra Neamț|1129|1412|579;city|Iași|1484|1575|591;town|Vaslui|1493|1630|673;town|Bacău|1320|1450|699;city|Cluj-Napoca|525|837|730;town|Târgu Mureș|908|1179|740;town|Bârlad|1477|1615|802;town|Arad|153|252|818;city|Timișoara|57|310|947;town|Deva|483|587|911;country|România|713|952|928;town|Sfântu|1077|1216|859;town|Gheorghe|1039|1254|916;town|Focșani|1265|1460|1003`
};
const names = layer();
for (const s in labels) labels[s].split(';').forEach(l => {
  const [cls, text, a, b, y] = l.split('|');
  const x = X(s, +a);
  add(names, 'text', { class: 'place ' + cls, x, y: Y(s, +y), textLength: X(s, +b) - x }, text);
});

// Position marker
add(svg, 'path', { d: 'M1124 613L1136 584Q1148 578 1153 588Q1155 600 1124 613Z', fill: '#000', opacity: .4, filter: 'url(#shade)' });
add(svg, 'path', { d: 'M1123.5 614C1119 600 1104.5 587 1104.5 572A19.3 19.3 0 0 1 1143 572C1143 587 1128 600 1123.5 614Z', fill: 'url(#pin)', stroke: '#2e6ca5', 'stroke-width': 1 });
add(svg, 'circle', { cx: 1123.5, cy: 572, r: 6.8, fill: '#fff', stroke: '#2e6ca5', 'stroke-width': .6 });
```
